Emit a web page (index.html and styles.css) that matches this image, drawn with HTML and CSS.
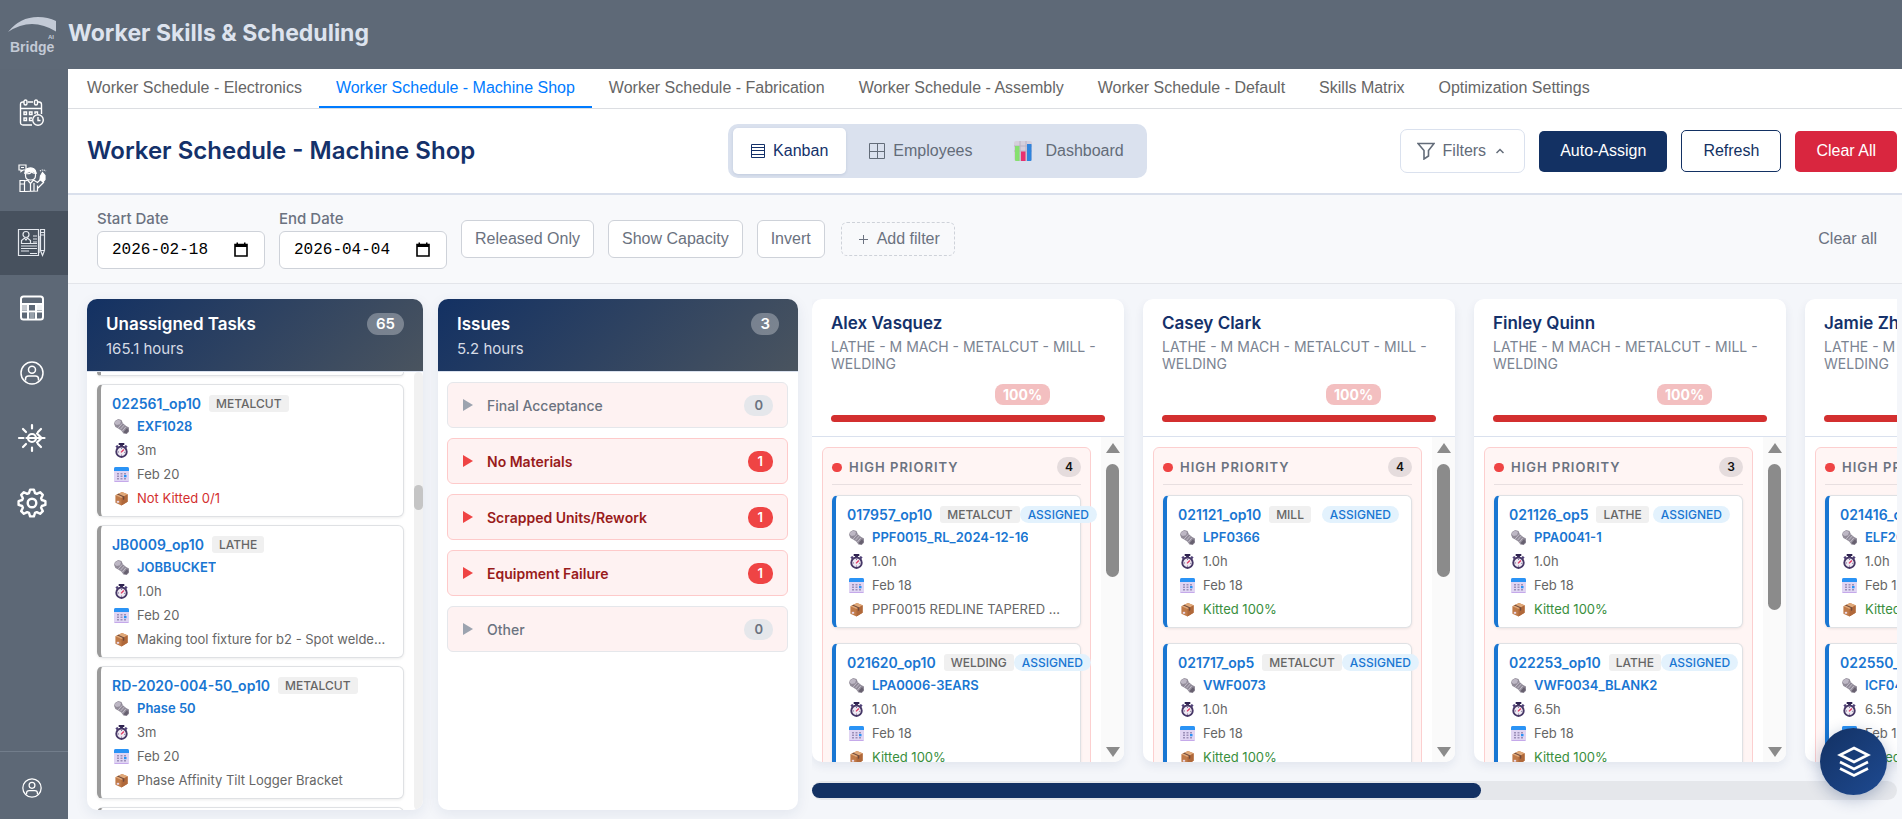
FILE: index.html
```html
<!DOCTYPE html>
<html lang="en">
<head>
<meta charset="utf-8">
<title>Worker Skills &amp; Scheduling</title>
<link rel="stylesheet" href="styles.css">
</head>
<body>
<svg class="sprite" aria-hidden="true">
  <symbol id="i-bolt" viewBox="0 0 16 16">
    <path d="M0 5 1 2 4.500 0 8 1 9.500 4.500 13 7.500 16 9 16 13.500 13.500 16 10 15.500 8 12.500 4.500 10 1.500 8.500Z" fill="#918b98"/>
    <path d="M.5 4.800 1.500 2.300 4.500 .5 7.500 2 6.500 5.500 3 6.500Z" fill="#bdb7c4"/>
    <path d="m4.500 9.500 4.500-5M6.800 11l4-4.500M8.800 13l3.700-4.500" stroke="#c3bdca" stroke-width="1"/>
    <path d="m10.500 13.500 3.500-4L15.500 12.500l-2 2.800-2.500-.3Z" fill="#67606f"/>
  </symbol>
  <symbol id="i-watch" viewBox="0 0 16 16">
    <path d="M5 0h6v2H9.500v2h-3V2H5Z" fill="#2f2350"/>
    <path d="m1.500 3.500 2-1.500 1.500 1.500-2 2ZM14.500 3.500l-2-1.500-1.500 1.500 2 2Z" fill="#53447a"/>
    <circle cx="8" cy="9.300" r="5.600" fill="#efe9f2" stroke="#463766" stroke-width="2"/>
    <path d="m7.500 10 3-3" stroke="#e0345e" stroke-width="1.400"/>
    <circle cx="8" cy="5.800" r=".6" fill="#6b5c88"/><circle cx="4.600" cy="9.500" r=".6" fill="#6b5c88"/><circle cx="8" cy="12.900" r=".6" fill="#6b5c88"/><circle cx="11.400" cy="9.800" r=".6" fill="#6b5c88"/>
  </symbol>
  <symbol id="i-cal" viewBox="0 0 15 15">
    <rect x="0" y="0" width="15" height="15" rx="1.500" fill="#e0d5f3"/>
    <path d="M0 4V1.500Q0 0 1.500 0h12Q15 0 15 1.500V4Z" fill="#2a93f5"/>
    <path d="M.5 14.500h14" stroke="#c5a9ea"/>
    <path d="M3 6h2v1.500H3ZM6.500 6h2v1.500h-2ZM10 6h2v1.500h-2ZM3 8.500h2V10H3ZM6.500 8.500h2V10h-2ZM3 11h2v1.500H3ZM6.500 11h2v1.500h-2ZM10 11h2v1.500h-2Z" fill="#9c90b8"/>
    <path d="M10 8h2.500v2.200H10Z" fill="#2a93f5"/>
  </symbol>
  <symbol id="i-box" viewBox="0 0 16 16">
    <path d="m1.500 4.500 7-3.500 6 2.500v8l-6.500 4-6.500-3Z" fill="#c07a48"/>
    <path d="m1.500 4.500 7-3.500 6 2.500-6.500 4Z" fill="#e0a878"/>
    <path d="M8 7.500v8l6.500-4v-8Z" fill="#b0683a"/>
    <path d="m4.500 2.800 6.500 3v3l-1.500.8V6.500l-6.500-3Z" fill="#6f4a3c"/>
    <rect x="3" y="10.500" width="2.500" height="2" fill="#ead9e8"/>
  </symbol>
  <symbol id="i-user" viewBox="0 0 24 24">
    <g fill="none" stroke="#fff" stroke-width="1.500"><circle cx="12" cy="12" r="11"/><circle cx="12" cy="8.800" r="3.500"/><path d="M5.500 19.500v-1.500q0-3 3-3h7q3 0 3 3v1.500"/></g>
  </symbol>
</svg>

<header class="topbar">
  <svg class="logo" viewBox="0 0 52 44" role="img" aria-label="Bridge AI">
    <path d="M2 16Q14 1 32 1 42 1 50 5V15.500Q38 8 26 8 14 8 2 16Z" fill="#c3cad6"/>
    <text x="42" y="23" class="logo-ai">AI</text>
    <text x="4" y="36" class="logo-name">Bridge</text>
  </svg>
  <h1 class="app-title">Worker Skills &amp; Scheduling</h1>
</header>

<div class="shell">
  <aside class="sidebar">
    <nav class="side-nav">
      <a class="side-link" href="#" aria-label="Calendar"><svg width="26" height="28" viewBox="0 0 26 28" fill="none" stroke="#fff" stroke-width="1.400"><path d="M13 26H4q-2.500 0-2.500-2.500v-18Q1.500 3 4 3h1M9 3h5M18 3h2q2.500 0 2.500 2.500V15M1.500 9.500h21"/><rect x="5" y="1" width="3" height="5" rx="1.500"/><rect x="15.500" y="1" width="3" height="5" rx="1.500"/><path d="M5 13h2.500v2.500H5ZM10.500 13H13v2.500h-2.500ZM16 15v-2h2.500v2M5 19h2.500v2.500H5ZM13 19h-2.500v2.500H13"/><circle cx="19" cy="21" r="5.300"/><path d="M19 18v3.500h2.500"/></svg></a>
      <a class="side-link" href="#" aria-label="Workers"><svg width="30" height="30" viewBox="0 0 30 30" fill="none" stroke="#fff" stroke-width="1.200"><path d="M2 2h7v5H6L4 8.500V7H2ZM4 4.500h3M8 11q0-6 5.500-6T19 11M8.500 10.500q5 1 6-2 1 2 4 2v2q0 4.500-5 4.500t-5-4.500Z"/><path d="M8 10q1-5 5.500-5t5.500 5l-4-2Z" fill="#fff"/><path d="M3 17.500h4.500v11H3ZM3 21h4M10.500 17l3 3.500 3-3.500M10.500 17 7 18.500M16.500 17l4 2.500 5-5M13.500 20.500v8M17 20v8.500M20.500 22.500V28L8 28.500M21 25l6-6"/><path d="M23.500 13l2-3.500 2.500 3v4l-2 2.500-3-2.500Z" fill="#fff"/><path d="M23 8q2.500-2 6 0" stroke-dasharray="1 1"/></svg></a>
      <a class="side-link side-link--active" href="#" aria-label="Scheduling"><svg width="30" height="30" viewBox="0 0 30 30" fill="none" stroke="#e4e8ee" stroke-width="1.200"><path d="M1.500 1.500h20v26h-20Z"/><path d="M23.500 1.500h4v21l-2 5-2-5ZM23.500 4.500h4M23.500 7h4M23.500 22.500h4M22 8v17"/><circle cx="9" cy="6.500" r="3"/><path d="M4.500 15.500v-3l3-2.500 1.500 2 1.500-2 3 2.500v3ZM16 8h4M16 11h4M16 14h4M4 18h16M4 20.500h16M4 23h8M13 25.500h7M4 15.500h16"/></svg></a>
      <a class="side-link" href="#" aria-label="Grid"><svg width="24" height="26" viewBox="0 0 24 26"><rect x="1" y="1.500" width="22" height="23" rx="2.500" fill="#5d6876" stroke="#fff" stroke-width="2"/><path d="M1 8h22v2H1Z" fill="#fff"/><path d="M2 10h5v5H2Z" fill="#c5c9cf"/><path d="M17 10h5v5h-5Z" fill="#f0f2f4"/><path d="M8 9v15M16 9v15M1 16.500h22" stroke="#fff" stroke-width="2"/><path d="M9.500 18h5v5h-5Z" fill="#97a0aa"/></svg></a>
      <a class="side-link" href="#" aria-label="Profile"><svg width="24" height="24"><use href="#i-user"/></svg></a>
      <a class="side-link" href="#" aria-label="Insights"><svg width="30" height="30" viewBox="0 0 30 30" fill="none" stroke="#fff" stroke-width="2.200" stroke-linecap="round"><path d="M15 2v3.500M15 24.500V28M2 15h4.500M6 6l3 3M24 6l-3 3M6 24l3-3M24 24l-3-3M9.500 15h18M20 10.500l4.500 4.500-4.500 4.500"/><circle cx="15" cy="15" r="4"/></svg></a>
      <a class="side-link" href="#" aria-label="Settings"><svg width="30" height="30" viewBox="0 0 30 30" fill="none" stroke="#fff" stroke-width="2.400" stroke-linejoin="round"><path d="M12 5.150 13.100 1.600H16.900L18 5.150 19.800 5.900 23.100 4.200 25.800 6.900 24.100 10.200 24.850 12 28.400 13.100V16.900L24.850 18 24.100 19.800 25.800 23.100 23.100 25.800 19.800 24.100 18 24.850 16.900 28.400H13.100L12 24.850 10.200 24.100 6.900 25.800 4.200 23.100 5.900 19.800 5.150 18 1.600 16.900V13.100L5.150 12 5.900 10.200 4.200 6.900 6.900 4.200 10.200 5.900Z"/><circle cx="15" cy="15" r="4.300"/></svg></a>
    </nav>
    <div class="side-foot"><a class="side-account" href="#" aria-label="Account"><svg width="20" height="20"><use href="#i-user"/></svg></a></div>
  </aside>

  <main class="main">
    <nav class="tabs">
      <a class="tab" href="#">Worker Schedule - Electronics</a>
      <a class="tab tab--active" href="#">Worker Schedule - Machine Shop</a>
      <a class="tab" href="#">Worker Schedule - Fabrication</a>
      <a class="tab" href="#">Worker Schedule - Assembly</a>
      <a class="tab" href="#">Worker Schedule - Default</a>
      <a class="tab" href="#">Skills Matrix</a>
      <a class="tab" href="#">Optimization Settings</a>
    </nav>

    <section class="page-head">
      <h2 class="page-title">Worker Schedule - Machine Shop</h2>
      <div class="views">
        <button class="view view--active" type="button"><svg width="14" height="14" viewBox="0 0 14 14" fill="none" stroke="currentColor"><path d="M.5.5h13v13H.5ZM.5 3.500h13M.5 6.500h13M.5 10.500h13"/></svg>Kanban</button>
        <button class="view" type="button"><svg width="16" height="16" viewBox="0 0 16 16" fill="none" stroke="currentColor"><path d="M.5.5h15v15H.5ZM8.500.5v15M.5 8.500h15"/></svg>Employees</button>
        <button class="view view--wide" type="button"><svg width="20" height="20" viewBox="0 0 20 20"><rect x="1" y="0" width="18" height="20" rx="2" fill="#d5cfdc"/><path d="M1 5h18M1 10h18M7 0v20M13 0v20" stroke="#b9b2c4"/><path d="M2 5h4.500v15H3q-1 0-1-1Z" fill="#86e070"/><path d="M8 10.500h4.500V20H8Z" fill="#e8306f"/><path d="M14 3h4.500v16q0 1-1 1H14Z" fill="#2f84dd"/></svg>Dashboard</button>
      </div>
      <div class="actions">
        <button class="btn btn--filters" type="button"><svg width="18" height="18" viewBox="0 0 18 18" fill="none" stroke="currentColor" stroke-width="1.600"><path d="M1 1.500h16l-5.500 7v5.500L7 17V8.500Z"/></svg>Filters<svg class="caret" width="8" height="6" viewBox="0 0 8 6" fill="none" stroke="currentColor" stroke-width="1.500"><path d="m.5 5 3.500-3.500L7.500 5"/></svg></button>
        <button class="btn btn--primary" type="button">Auto-Assign</button>
        <button class="btn btn--outline" type="button">Refresh</button>
        <button class="btn btn--danger" type="button">Clear All</button>
      </div>
    </section>

    <section class="filters">
      <div class="field">
        <label for="start">Start Date</label>
        <div class="date"><input id="start" type="text" value="2026-02-18"><svg width="14" height="15" viewBox="0 0 14 15"><path d="M1 2.500h12V14H1Z" fill="none" stroke="#000" stroke-width="1.600"/><path d="M1 2h12v3H1ZM2.500.5H4V3H2.500ZM10 .5h1.500V3H10Z"/></svg></div>
      </div>
      <div class="field">
        <label for="end">End Date</label>
        <div class="date"><input id="end" type="text" value="2026-04-04"><svg width="14" height="15" viewBox="0 0 14 15"><path d="M1 2.500h12V14H1Z" fill="none" stroke="#000" stroke-width="1.600"/><path d="M1 2h12v3H1ZM2.500.5H4V3H2.500ZM10 .5h1.500V3H10Z"/></svg></div>
      </div>
      <button class="chip" type="button">Released Only</button>
      <button class="chip" type="button">Show Capacity</button>
      <button class="chip" type="button">Invert</button>
      <button class="chip chip--add" type="button"><svg width="9" height="9" viewBox="0 0 9 9" stroke="currentColor"><path d="M4.500 0v9M0 4.500h9"/></svg>Add filter</button>
      <button class="clear" type="button">Clear all</button>
    </section>

    <section class="board">
      <article class="column column--tasks">
        <header class="column-head">
          <div class="head-row"><h3>Unassigned Tasks</h3><span class="count">65</span></div>
          <p>165.1 hours</p>
        </header>
        <div class="task-area">
          <div class="task-list">
            <div class="task task--tail"></div>
            <div class="task">
              <div class="task-top"><a class="task-id" href="#">022561_op10</a><span class="tag">METALCUT</span></div>
              <div class="line line--part"><svg><use href="#i-bolt"/></svg><span>EXF1028</span></div>
              <div class="line"><svg><use href="#i-watch"/></svg><span>3m</span></div>
              <div class="line"><svg><use href="#i-cal"/></svg><span>Feb 20</span></div>
              <div class="line line--bad"><svg><use href="#i-box"/></svg><span>Not Kitted 0/1</span></div>
            </div>
            <div class="task">
              <div class="task-top"><a class="task-id" href="#">JB0009_op10</a><span class="tag">LATHE</span></div>
              <div class="line line--part"><svg><use href="#i-bolt"/></svg><span>JOBBUCKET</span></div>
              <div class="line"><svg><use href="#i-watch"/></svg><span>1.0h</span></div>
              <div class="line"><svg><use href="#i-cal"/></svg><span>Feb 20</span></div>
              <div class="line"><svg><use href="#i-box"/></svg><span>Making tool fixture for b2 - Spot welder fixture</span></div>
            </div>
            <div class="task">
              <div class="task-top"><a class="task-id" href="#">RD-2020-004-50_op10</a><span class="tag">METALCUT</span></div>
              <div class="line line--part"><svg><use href="#i-bolt"/></svg><span>Phase 50</span></div>
              <div class="line"><svg><use href="#i-watch"/></svg><span>3m</span></div>
              <div class="line"><svg><use href="#i-cal"/></svg><span>Feb 20</span></div>
              <div class="line"><svg><use href="#i-box"/></svg><span>Phase Affinity Tilt Logger Bracket</span></div>
            </div>
            <div class="task task--next"></div>
          </div>
          <div class="rail"><div class="rail-thumb"></div></div>
        </div>
      </article>

      <article class="column column--issues">
        <header class="column-head">
          <div class="head-row"><h3>Issues</h3><span class="count">3</span></div>
          <p>5.2 hours</p>
        </header>
        <div class="issues">
          <button class="issue" type="button"><i></i><span>Final Acceptance</span><b>0</b></button>
          <button class="issue issue--open" type="button"><i></i><span>No Materials</span><b>1</b></button>
          <button class="issue issue--open" type="button"><i></i><span>Scrapped Units/Rework</span><b>1</b></button>
          <button class="issue issue--open" type="button"><i></i><span>Equipment Failure</span><b>1</b></button>
          <button class="issue" type="button"><i></i><span>Other</span><b>0</b></button>
        </div>
      </article>

      <div class="people">
        <div class="people-row">
          <article class="person">
            <header class="person-head">
              <h3>Alex Vasquez</h3>
              <p>LATHE - M MACH - METALCUT - MILL - WELDING</p>
              <div class="load"><span>100%</span></div>
              <div class="bar"></div>
            </header>
            <div class="person-body">
              <div class="lane">
                <div class="lane-head"><i></i><h4>HIGH PRIORITY</h4><b>4</b></div>
                <div class="task">
                  <div class="task-top"><a class="task-id" href="#">017957_op10</a><span class="tag">METALCUT</span><span class="status">ASSIGNED</span></div>
                  <div class="line line--part"><svg><use href="#i-bolt"/></svg><span>PPF0015_RL_2024-12-16</span></div>
                  <div class="line"><svg><use href="#i-watch"/></svg><span>1.0h</span></div>
                  <div class="line"><svg><use href="#i-cal"/></svg><span>Feb 18</span></div>
                  <div class="line"><svg><use href="#i-box"/></svg><span>PPF0015 REDLINE TAPERED MOUNT</span></div>
                </div>
                <div class="task">
                  <div class="task-top"><a class="task-id" href="#">021620_op10</a><span class="tag">WELDING</span><span class="status">ASSIGNED</span></div>
                  <div class="line line--part"><svg><use href="#i-bolt"/></svg><span>LPA0006-3EARS</span></div>
                  <div class="line"><svg><use href="#i-watch"/></svg><span>1.0h</span></div>
                  <div class="line"><svg><use href="#i-cal"/></svg><span>Feb 18</span></div>
                  <div class="line line--ok"><svg><use href="#i-box"/></svg><span>Kitted 100%</span></div>
                </div>
              </div>
              <div class="scroller"><i class="up"></i><div class="thumb thumb--a"></div><i class="down"></i></div>
            </div>
          </article>

          <article class="person">
            <header class="person-head">
              <h3>Casey Clark</h3>
              <p>LATHE - M MACH - METALCUT - MILL - WELDING</p>
              <div class="load"><span>100%</span></div>
              <div class="bar"></div>
            </header>
            <div class="person-body">
              <div class="lane">
                <div class="lane-head"><i></i><h4>HIGH PRIORITY</h4><b>4</b></div>
                <div class="task">
                  <div class="task-top"><a class="task-id" href="#">021121_op10</a><span class="tag">MILL</span><span class="status">ASSIGNED</span></div>
                  <div class="line line--part"><svg><use href="#i-bolt"/></svg><span>LPF0366</span></div>
                  <div class="line"><svg><use href="#i-watch"/></svg><span>1.0h</span></div>
                  <div class="line"><svg><use href="#i-cal"/></svg><span>Feb 18</span></div>
                  <div class="line line--ok"><svg><use href="#i-box"/></svg><span>Kitted 100%</span></div>
                </div>
                <div class="task">
                  <div class="task-top"><a class="task-id" href="#">021717_op5</a><span class="tag">METALCUT</span><span class="status">ASSIGNED</span></div>
                  <div class="line line--part"><svg><use href="#i-bolt"/></svg><span>VWF0073</span></div>
                  <div class="line"><svg><use href="#i-watch"/></svg><span>1.0h</span></div>
                  <div class="line"><svg><use href="#i-cal"/></svg><span>Feb 18</span></div>
                  <div class="line line--ok"><svg><use href="#i-box"/></svg><span>Kitted 100%</span></div>
                </div>
              </div>
              <div class="scroller"><i class="up"></i><div class="thumb thumb--a"></div><i class="down"></i></div>
            </div>
          </article>

          <article class="person">
            <header class="person-head">
              <h3>Finley Quinn</h3>
              <p>LATHE - M MACH - METALCUT - MILL - WELDING</p>
              <div class="load"><span>100%</span></div>
              <div class="bar"></div>
            </header>
            <div class="person-body">
              <div class="lane">
                <div class="lane-head"><i></i><h4>HIGH PRIORITY</h4><b>3</b></div>
                <div class="task">
                  <div class="task-top"><a class="task-id" href="#">021126_op5</a><span class="tag">LATHE</span><span class="status">ASSIGNED</span></div>
                  <div class="line line--part"><svg><use href="#i-bolt"/></svg><span>PPA0041-1</span></div>
                  <div class="line"><svg><use href="#i-watch"/></svg><span>1.0h</span></div>
                  <div class="line"><svg><use href="#i-cal"/></svg><span>Feb 18</span></div>
                  <div class="line line--ok"><svg><use href="#i-box"/></svg><span>Kitted 100%</span></div>
                </div>
                <div class="task">
                  <div class="task-top"><a class="task-id" href="#">022253_op10</a><span class="tag">LATHE</span><span class="status">ASSIGNED</span></div>
                  <div class="line line--part"><svg><use href="#i-bolt"/></svg><span>VWF0034_BLANK2</span></div>
                  <div class="line"><svg><use href="#i-watch"/></svg><span>6.5h</span></div>
                  <div class="line"><svg><use href="#i-cal"/></svg><span>Feb 18</span></div>
                  <div class="line line--ok"><svg><use href="#i-box"/></svg><span>Kitted 100%</span></div>
                </div>
              </div>
              <div class="scroller"><i class="up"></i><div class="thumb thumb--b"></div><i class="down"></i></div>
            </div>
          </article>

          <article class="person">
            <header class="person-head">
              <h3>Jamie Zhang</h3>
              <p>LATHE - M MACH - METALCUT - MILL - WELDING</p>
              <div class="load"><span>100%</span></div>
              <div class="bar"></div>
            </header>
            <div class="person-body">
              <div class="lane">
                <div class="lane-head"><i></i><h4>HIGH PRIORITY</h4><b>3</b></div>
                <div class="task">
                  <div class="task-top"><a class="task-id" href="#">021416_op10</a></div>
                  <div class="line line--part"><svg><use href="#i-bolt"/></svg><span>ELF2001</span></div>
                  <div class="line"><svg><use href="#i-watch"/></svg><span>1.0h</span></div>
                  <div class="line"><svg><use href="#i-cal"/></svg><span>Feb 18</span></div>
                  <div class="line line--ok"><svg><use href="#i-box"/></svg><span>Kitted 100%</span></div>
                </div>
                <div class="task">
                  <div class="task-top"><a class="task-id" href="#">022550_op10</a></div>
                  <div class="line line--part"><svg><use href="#i-bolt"/></svg><span>ICF0400</span></div>
                  <div class="line"><svg><use href="#i-watch"/></svg><span>6.5h</span></div>
                  <div class="line"><svg><use href="#i-cal"/></svg><span>Feb 18</span></div>
                  <div class="line line--ok"><svg><use href="#i-box"/></svg><span>Kitted 100%</span></div>
                </div>
              </div>
            </div>
          </article>
        </div>
        <div class="hscroll"><div class="hscroll-thumb"></div></div>
      </div>
    </section>
  </main>
</div>

<button class="fab" type="button" aria-label="Layers"><svg width="34" height="32" viewBox="0 0 34 32" fill="none" stroke="#fff" stroke-width="2.600" stroke-linejoin="miter"><path d="M17 2 31 9 17 16 3 9ZM3 16l14 7 14-7M3 22.500l14 7 14-7"/></svg></button>
</body>
</html>
```

FILE: styles.css
```css
* { box-sizing: border-box; }

body {
  margin: 0;
  height: 100vh;
  display: flex;
  flex-direction: column;
  overflow: hidden;
  background: #f4f6fa;
  color: #666;
  font-family: Inter, "Liberation Sans", sans-serif;
}

h1, h2, h3, h4, p { margin: 0; }
a { color: inherit; text-decoration: none; }
svg { display: block; flex: none; }
button { font-family: "Liberation Sans", Arial, sans-serif; font-size: 16px; cursor: pointer; }

.sprite { position: absolute; width: 0; height: 0; }

/* Top bar */
.topbar {
  flex: none;
  display: flex;
  align-items: flex-start;
  height: 69px;
  padding: 16px 0 0 6px;
  background: #5e6977;
}
.logo { width: 52px; height: 44px; margin-right: 10px; }
.logo-name { font: bold 14px "Liberation Sans", Arial, sans-serif; fill: #c3cad6; }
.logo-ai { font: bold 6px "Liberation Sans", Arial, sans-serif; fill: #c3cad6; }
.app-title { font-size: 23px; line-height: 34px; font-weight: 700; color: #dde3ee; }

.shell { flex: 1; display: flex; min-height: 0; }

/* Sidebar */
.sidebar {
  flex: none;
  width: 68px;
  display: flex;
  flex-direction: column;
  justify-content: space-between;
  background: #5d6876;
}
.side-nav { display: flex; flex-direction: column; gap: 1px; padding-top: 12px; }
.side-link { display: flex; align-items: center; justify-content: center; height: 64px; padding-right: 4px; }
.side-link--active { background: #47515e; }
.side-foot { border-top: 1px solid #727d8b; }
.side-account { display: flex; align-items: center; justify-content: center; height: 67px; padding: 5px 4px 0 0; }

/* Main */
.main { flex: 1; min-width: 0; display: flex; flex-direction: column; }

.tabs {
  flex: none;
  display: flex;
  height: 40px;
  padding-left: 2px;
  background: #fff;
  border-bottom: 1px solid #dcdee2;
  font: 16px "Liberation Sans", Arial, sans-serif;
}
.tab { padding: 0 17px; line-height: 37px; border-bottom: 2px solid transparent; }
.tab--active { color: #007bff; border-color: #007bff; }

.page-head {
  flex: none;
  display: flex;
  align-items: center;
  justify-content: space-between;
  padding: 15px 5px 15px 19px;
  background: #fff;
  border-bottom: 2px solid #dae0ec;
}
.page-title { font-size: 24px; line-height: 30px; font-weight: 600; color: #14316a; }

.views { display: flex; gap: 5px; padding: 4px 5px; border-radius: 10px; background: #dae1ee; }
.view {
  display: flex;
  align-items: center;
  gap: 8px;
  height: 46px;
  padding: 0 18px;
  border: 0;
  border-radius: 5px;
  background: transparent;
  color: #636c79;
}
.view--wide { gap: 12px; }
.view--active { background: #fff; color: #14316a; box-shadow: 0 1px 3px rgba(20, 49, 106, .12); }

.actions { display: flex; align-items: center; gap: 14px; }
.btn { height: 41px; padding: 0 21px; border: 0; border-radius: 5px; color: #fff; }
.btn--primary { background: #133163; }
.btn--outline { height: 42px; border: 1px solid #133163; background: #fff; color: #133163; }
.btn--danger { background: #d9263f; }
.btn--filters {
  display: flex;
  align-items: center;
  gap: 8px;
  height: 44px;
  padding: 0 20px 0 16px;
  border: 1px solid #dae1ee;
  border-radius: 7px;
  background: #fff;
  color: #636c79;
}
.caret { margin-left: 2px; }

/* Filter bar */
.filters {
  flex: none;
  display: flex;
  align-items: center;
  gap: 14px;
  height: 89px;
  padding: 0 20px 0 29px;
  background: #f8f9fb;
  border-bottom: 1px solid #e3e5ea;
}
.field { display: flex; flex-direction: column; gap: 4px; }
.field label { font-size: 15px; line-height: 17px; font-weight: 500; color: #6b7280; }
.date {
  display: flex;
  align-items: center;
  width: 168px;
  height: 38px;
  padding: 0 16px 0 14px;
  border: 1px solid #ced2d9;
  border-radius: 6px;
  background: #fff;
}
.date input {
  flex: 1;
  min-width: 0;
  padding: 0;
  border: 0;
  outline: 0;
  background: transparent;
  font: 16px "Liberation Mono", monospace;
  color: #000;
}
.chip { height: 38px; padding: 0 13px; border: 1px solid #ced2d9; border-radius: 6px; background: #fff; color: #6b7280; }
.chip--add { display: flex; align-items: center; gap: 9px; height: 34px; margin-left: 2px; padding: 0 14px 0 17px; border-style: dashed; background: transparent; }
.clear { margin-left: auto; padding: 0 5px; border: 0; background: transparent; color: #6b7280; }

/* Board */
.board { flex: 1; min-height: 0; display: flex; gap: 14px; padding: 15px 5px 9px 19px; }
.column {
  flex: none;
  display: flex;
  flex-direction: column;
  overflow: hidden;
  border-radius: 10px;
  background: #fff;
  box-shadow: 0 4px 14px rgba(20, 49, 106, .08);
}
.column--tasks { width: 336px; margin-right: 1px; }
.column--issues { width: 360px; }
.column-head {
  flex: none;
  height: 73px;
  padding: 13px 19px 0;
  border-bottom: 1px solid #dae1ee;
  background: linear-gradient(135deg, #133163, #4a545f);
  color: #fff;
}
.head-row { display: flex; align-items: center; justify-content: space-between; }
.head-row h3 { font-size: 17px; line-height: 24px; font-weight: 600; }
.count { padding: 0 9px; border-radius: 11px; background: rgba(255, 255, 255, .3); font-size: 15px; line-height: 22px; font-weight: 600; }
.column-head p { font-size: 15px; line-height: 25px; color: #d5dbe5; }

.task-area { flex: 1; min-height: 0; display: flex; }
.task-list { flex: 1; min-width: 0; display: flex; flex-direction: column; gap: 8px; padding: 0 10px; overflow: hidden; }
.rail { flex: none; width: 9px; padding-top: 113px; border-radius: 5px; background: #f1f1f1; }
.rail-thumb { height: 25px; border-radius: 5px; background: #c5c5c5; }

.task {
  flex: none;
  height: 133px;
  padding: 7px 12px 5px 11px;
  border: 1px solid #dfe1e4;
  border-left: 4px solid #9a9a9a;
  border-radius: 6px;
  background: #fff;
  box-shadow: 0 1px 3px rgba(0, 0, 0, .08);
}
.lane .task { border-left-color: #1976d2; }
.task--tail { height: 4px; padding: 0; border-top: 0; border-radius: 0 0 6px 6px; }
.task-top { display: flex; align-items: center; height: 22px; white-space: nowrap; }
.task-id { margin-right: 8px; font-size: 14px; font-weight: 600; color: #1976d2; }
.tag { padding: 0 7px; border-radius: 3px; background: #f0f0f0; font-size: 12px; line-height: 17px; font-weight: 500; color: #666; }
.status { margin-left: auto; padding: 0 8px; border-radius: 9px; background: #e3f2fd; font-size: 12px; line-height: 17px; font-weight: 500; color: #1976d2; }
.line { display: flex; align-items: center; gap: 8px; height: 24px; padding: 0 2px; font-size: 13px; }
.line svg { width: 15px; height: 15px; }
.line span { overflow: hidden; text-overflow: ellipsis; white-space: nowrap; }
.line--part { font-weight: 600; color: #1976d2; }
.line--bad { color: #d32f2f; }
.line--ok { color: #388e3c; }

/* Issues */
.issues { display: flex; flex-direction: column; gap: 10px; padding: 10px 10px 10px 9px; }
.issue {
  display: flex;
  align-items: center;
  height: 46px;
  padding: 0 14px 0 15px;
  border: 1px solid #e5e7eb;
  border-radius: 6px;
  background: #fef2f2;
  color: #6b7280;
  font: 500 14px Inter, sans-serif;
}
.issue i { margin-right: 14px; border: 6px solid transparent; border-left: 10px solid #9ca3af; border-right: 0; }
.issue b { margin-left: auto; padding: 0 10px; border-radius: 10px; background: #e5e7eb; font-size: 13px; line-height: 21px; font-weight: 600; }
.issue--open { border-color: #fecaca; color: #991b1b; font-weight: 600; }
.issue--open i { border-left-color: #ef4444; }
.issue--open b { background: #ef4444; color: #fff; }

/* Employees */
.people { flex: 1; min-width: 0; display: flex; flex-direction: column; }
.people-row { flex: 1; min-height: 0; display: flex; gap: 19px; overflow: hidden; padding-bottom: 19px; }
.person {
  flex: none;
  width: 312px;
  display: flex;
  flex-direction: column;
  overflow: hidden;
  border-radius: 10px;
  background: #fff;
  box-shadow: 0 4px 10px rgba(20, 49, 106, .08);
}
.person-head { flex: none; height: 138px; padding: 13px 19px 0; border-bottom: 1px solid #dae1ee; }
.person-head h3 { font-size: 17px; line-height: 22px; font-weight: 600; color: #14316a; }
.person-head p { margin-top: 4px; font-size: 14px; line-height: 17px; color: #7b8492; }
.load { display: flex; margin-top: 12px; padding-left: 164px; }
.load span { padding: 0 8px; border-radius: 8px; background: #f3bfc0; font-size: 14px; line-height: 21px; font-weight: 700; color: #fff; }
.bar { height: 7px; margin-top: 10px; border-radius: 4px; background: #d32f2f; }

.person-body { flex: 1; min-height: 0; display: flex; justify-content: space-between; overflow: hidden; }
.lane {
  flex: none;
  width: 269px;
  height: 600px;
  margin: 10px 0 0 10px;
  display: flex;
  flex-direction: column;
  gap: 15px;
  padding: 9px;
  border: 1px solid #fccfcf;
  border-radius: 6px;
  background: #fff5f4;
}
.lane-head { display: flex; align-items: center; height: 28px; margin-bottom: -5px; padding-bottom: 7px; border-bottom: 1px solid #e8dfe0; }
.lane-head i { width: 10px; height: 9px; margin-right: 7px; border-radius: 5px; background: #ef4444; }
.lane-head h4 { font-size: 13px; font-weight: 600; letter-spacing: 1px; color: #6b7280; }
.lane-head b { margin-left: auto; padding: 0 8px; border-radius: 10px; background: #e5dcdd; font-size: 12px; line-height: 20px; font-weight: 600; color: #111; }

.scroller { flex: none; width: 23px; display: flex; flex-direction: column; align-items: center; padding: 6px 0 5px; background: #fafafa; }
.scroller i { border: 7px solid transparent; }
.scroller .up { border-top: 0; border-bottom: 10px solid #8b8b8b; }
.scroller .down { margin-top: auto; border-bottom: 0; border-top: 10px solid #8b8b8b; }
.thumb { width: 13px; margin-top: 11px; border-radius: 7px; background: #8b8b8b; }
.thumb--a { height: 113px; }
.thumb--b { height: 146px; }

.hscroll { flex: none; height: 19px; margin-bottom: 10px; padding: 2px 0; border-radius: 10px; background: #e5e7eb; }
.hscroll-thumb { width: 61.7%; height: 15px; border-radius: 8px; background: #133163; }

.fab {
  position: fixed;
  right: 15px;
  bottom: 24px;
  display: flex;
  align-items: center;
  justify-content: center;
  width: 67px;
  height: 67px;
  border: 0;
  border-radius: 50%;
  background: linear-gradient(135deg, #133163, #1e4a91);
  box-shadow: 0 4px 16px rgba(20, 49, 106, .3);
}
```
